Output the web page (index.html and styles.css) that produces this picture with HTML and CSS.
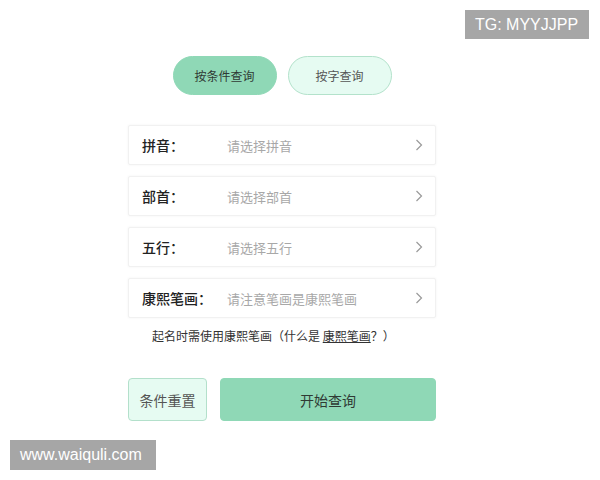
FILE: index.html
```html
<!DOCTYPE html>
<html lang="zh-CN">
<head>
<meta charset="utf-8">
<title>起名查询</title>
<link rel="stylesheet" href="styles.css">
</head>
<body>
<div class="page">
  <div class="panel">
    <div class="tabs">
      <button class="tab tab-active">按条件查询</button>
      <button class="tab">按字查询</button>
    </div>
    <div class="fields">
      <div class="field">
        <span class="label">拼音：</span>
        <span class="placeholder">请选择拼音</span>
        <svg class="chevron" viewBox="0 0 8 12" width="8" height="12"><path d="M1.5 1 L6.5 6 L1.5 11" fill="none" stroke="#9a9a9a" stroke-width="1.2"/></svg>
      </div>
      <div class="field">
        <span class="label">部首：</span>
        <span class="placeholder">请选择部首</span>
        <svg class="chevron" viewBox="0 0 8 12" width="8" height="12"><path d="M1.5 1 L6.5 6 L1.5 11" fill="none" stroke="#9a9a9a" stroke-width="1.2"/></svg>
      </div>
      <div class="field">
        <span class="label">五行：</span>
        <span class="placeholder">请选择五行</span>
        <svg class="chevron" viewBox="0 0 8 12" width="8" height="12"><path d="M1.5 1 L6.5 6 L1.5 11" fill="none" stroke="#9a9a9a" stroke-width="1.2"/></svg>
      </div>
      <div class="field">
        <span class="label">康熙笔画：</span>
        <span class="placeholder">请注意笔画是康熙笔画</span>
        <svg class="chevron" viewBox="0 0 8 12" width="8" height="12"><path d="M1.5 1 L6.5 6 L1.5 11" fill="none" stroke="#9a9a9a" stroke-width="1.2"/></svg>
      </div>
    </div>
    <p class="note">起名时需使用康熙笔画（什么是 <span class="link">康熙笔画</span>？）</p>
    <div class="actions">
      <button class="btn btn-reset">条件重置</button>
      <button class="btn btn-start">开始查询</button>
    </div>
  </div>
  <div class="badge badge-tg">TG: MYYJJPP</div>
  <div class="badge badge-site">www.waiquli.com</div>
</div>
</body>
</html>
```

FILE: styles.css
```css
* { box-sizing: border-box; }
html, body {
  margin: 0;
  padding: 0;
  background: #ffffff;
}
body {
  font-family: "Noto Sans CJK SC", "Noto Sans", sans-serif;
  color: #333;
}
.page {
  position: relative;
  width: 600px;
  height: 480px;
  overflow: hidden;
}
.panel {
  margin-left: 128px;
  width: 308px;
  padding-top: 56px;
}
.tabs {
  display: flex;
  justify-content: center;
  gap: 11px;
}
.tab {
  width: 104px;
  height: 39px;
  border-radius: 20px;
  border: 1px solid #b3e2cb;
  background: #e6fbf2;
  color: #555;
  font-family: inherit;
  font-size: 12px;
  padding: 0;
  margin: 0;
}
.tab-active {
  background: #8fd8b6;
  border-color: #8fd8b6;
  color: #2f3a34;
}
.fields {
  margin-top: 30px;
  display: flex;
  flex-direction: column;
  gap: 11px;
}
.field {
  height: 40px;
  display: flex;
  align-items: center;
  padding: 0 12px 0 13px;
  border: 1px solid #f1f1f1;
  border-radius: 2px;
  box-shadow: 0 0 3px rgba(0, 0, 0, 0.05);
  background: #fff;
}
.label {
  width: 85px;
  font-size: 14px;
  font-weight: 500;
  color: #222;
}
.placeholder {
  flex: 1;
  font-size: 13px;
  color: #a8a8a8;
}
.chevron {
  display: block;
}
.note {
  margin: 9px 0 0 24px;
  font-size: 12px;
  line-height: 18px;
  color: #333;
}
.link {
  text-decoration: underline;
}
.actions {
  margin-top: 33px;
  display: flex;
  gap: 13px;
}
.btn {
  height: 43px;
  border-radius: 4px;
  font-family: inherit;
  font-size: 14px;
  padding: 0;
  margin: 0;
}
.btn-reset {
  width: 79px;
  border: 1px solid #b3e0cb;
  background: #e6fbf2;
  color: #555;
}
.btn-start {
  flex: 1;
  border: 1px solid #8fd8b6;
  background: #8fd8b6;
  color: #2f3a34;
}
.badge {
  position: absolute;
  background: #a6a6a6;
  color: #fff;
  font-family: "Liberation Sans", Arial, sans-serif;
  font-size: 16px;
  padding: 0 10px;
  display: flex;
  align-items: center;
}
.badge-tg {
  top: 10px;
  left: 465px;
  width: 124px;
  height: 29px;
}
.badge-site {
  top: 440px;
  left: 10px;
  width: 146px;
  height: 30px;
}
```
